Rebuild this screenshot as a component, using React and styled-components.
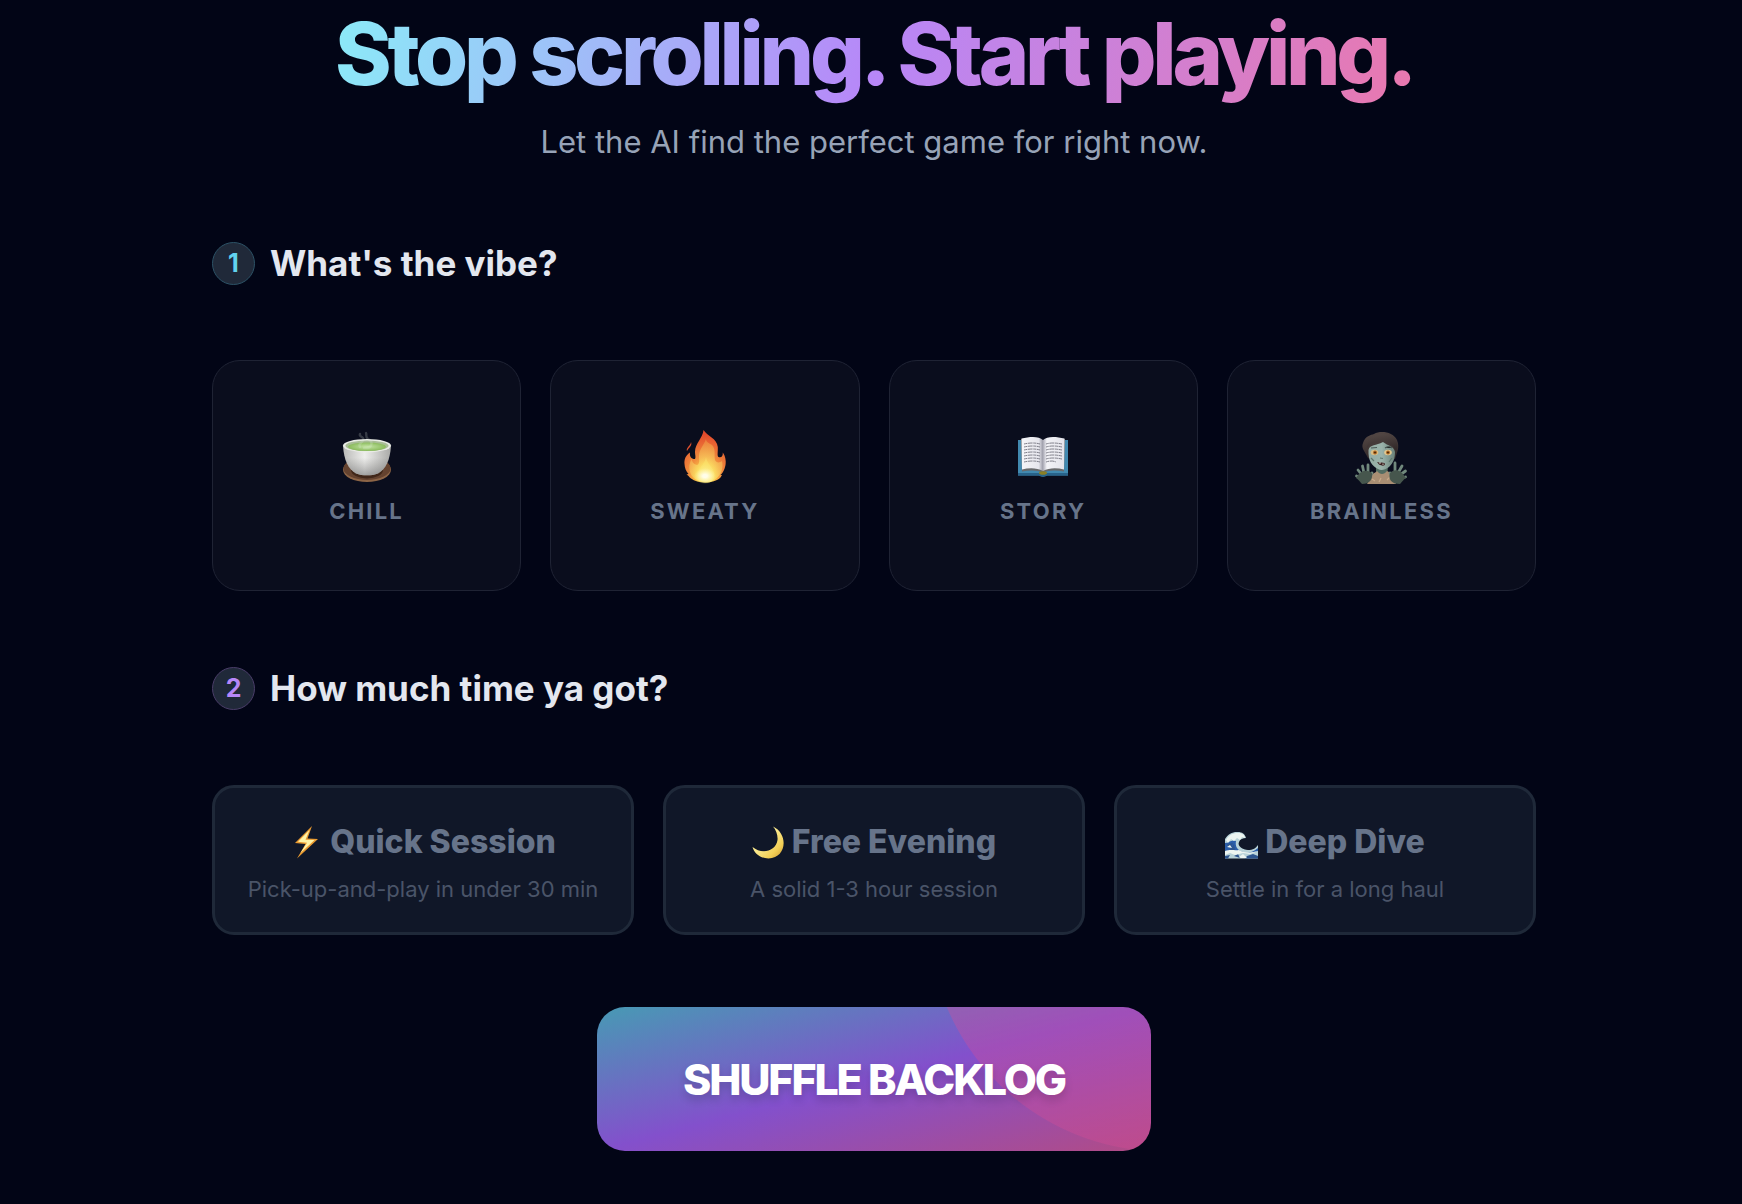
import React, { useState } from "react";
import styled, { createGlobalStyle } from "styled-components";

const GlobalStyle = createGlobalStyle`
  *, *::before, *::after { box-sizing: border-box; }
  body {
    margin: 0;
    background: #020516;
    color: #e3e7ef;
    font-family: Inter, "Liberation Sans", sans-serif;
  }
  button { font: inherit; color: inherit; cursor: pointer; }
`;

const Page = styled.main`
  min-height: 100vh;
  padding: 10px 206px 53px 212px;
`;

const Hero = styled.header`
  display: flex;
  flex-direction: column;
  align-items: center;
  text-align: center;
`;

const Title = styled.h1`
  margin: 0;
  padding: 0 0 8px;
  font-size: 86px;
  line-height: 88px;
  font-weight: 800;
  letter-spacing: -0.05em;
  color: transparent;
  background: linear-gradient(105deg, #8bebf8, #b787f8 50%, #e978ae);
  background-clip: text;
  -webkit-background-clip: text;
`;

const Subtitle = styled.p`
  margin: 16px 0 80px;
  font-size: 31px;
  line-height: 40px;
  color: #97a3b7;
`;

const StepHeading = styled.h2`
  display: flex;
  align-items: center;
  gap: 15px;
  margin: 0 0 75px;
  font-size: 35px;
  line-height: 43px;
  font-weight: 700;
`;

const StepBadge = styled.span`
  display: flex;
  flex: none;
  align-items: center;
  justify-content: center;
  width: 43px;
  height: 43px;
  border: 1px solid ${(p) => p.$edge};
  border-radius: 50%;
  background: #202939;
  color: ${(p) => p.$color};
  font-size: 25px;
`;

const CardGrid = styled.div`
  display: grid;
  grid-template-columns: repeat(${(p) => p.$columns}, 1fr);
  gap: 29px;
  margin-bottom: ${(p) => p.$after}px;
`;

const VibeCard = styled.button`
  display: flex;
  flex-direction: column;
  align-items: center;
  gap: 13px;
  padding: 69px 0 65px;
  border: 1px solid #1f2334;
  border-radius: 28px;
  background: #0a0d1d;

  &[aria-pressed="true"] { border-color: #3c6f85; }
`;

const VibeLabel = styled.span`
  font-size: 22px;
  line-height: 28px;
  font-weight: 700;
  letter-spacing: 0.1em;
  text-transform: uppercase;
  color: #67748a;
`;

const TimeCard = styled.button`
  display: flex;
  flex-direction: column;
  align-items: center;
  gap: 13px;
  padding: 34px 0 29px;
  border: 3px solid #1f2939;
  border-radius: 22px;
  background: #101728;

  &[aria-pressed="true"] { border-color: #6d4f9c; }
`;

const TimeTitle = styled.span`
  display: flex;
  align-items: center;
  gap: 7px;
  font-size: 32px;
  line-height: 40px;
  font-weight: 800;
  color: #67748a;
`;

const TimeNote = styled.span`
  font-size: 22px;
  line-height: 28px;
  color: #4a5468;
`;

const Emoji = styled.svg`
  display: block;
  flex: none;
  width: ${(p) => p.$size}px;
  height: ${(p) => p.$size}px;
`;

const Actions = styled.div`
  display: flex;
  justify-content: center;
`;

const ShuffleButton = styled.button`
  padding: 44px 86px;
  border: 0;
  border-radius: 28px;
  background:
    radial-gradient(circle 236px at calc(100% + 13px) -91px, rgba(216, 76, 150, 0.34) 235px, transparent 236px),
    linear-gradient(to bottom right, #479ab4, #8350cc, #b24b85);
  color: #fff;
  font-size: 43px;
  line-height: 56px;
  font-weight: 800;
  letter-spacing: -0.05em;
  text-shadow: 0 5px 8px rgba(0, 0, 0, 0.16);
`;

function TeaIcon() {
  return (
    <Emoji $size={54} viewBox="0 0 54 54" aria-hidden="true">
      <defs>
        <linearGradient id="cup" x1="0" x2="1">
          <stop offset="0" stopColor="#b9b9b7" />
          <stop offset="0.45" stopColor="#eeeeec" />
          <stop offset="1" stopColor="#a9a9a7" />
        </linearGradient>
        <linearGradient id="cupShade" x1="0" y1="0" x2="0" y2="1">
          <stop offset="0.4" stopColor="#777" stopOpacity="0" />
          <stop offset="1" stopColor="#666" stopOpacity="0.55" />
        </linearGradient>
        <radialGradient id="tea">
          <stop offset="0" stopColor="#c4e4a4" />
          <stop offset="1" stopColor="#8abb5c" />
        </radialGradient>
      </defs>
      <ellipse cx="27" cy="39.8" rx="24" ry="12.2" fill="#8c6446" />
      <ellipse cx="27" cy="38.4" rx="23.6" ry="11.6" fill="#64422f" />
      <ellipse cx="27" cy="40" rx="16" ry="8.5" fill="#412719" />
      <path d="M3 16C4 30 8 39 16 43.4C22 46 32 46 38 43.4C46 39 50 30 51 16Z" fill="url(#cup)" />
      <path d="M3 16C4 30 8 39 16 43.4C22 46 32 46 38 43.4C46 39 50 30 51 16Z" fill="url(#cupShade)" />
      <ellipse cx="27" cy="15.6" rx="24" ry="6.6" fill="#e9ebe5" />
      <ellipse cx="27" cy="15.8" rx="21.6" ry="5.2" fill="#a9bd96" />
      <ellipse cx="27" cy="16.7" rx="19" ry="4.2" fill="url(#tea)" />
      <path d="M20 17C17 12 25 13 23 8C22 6 19 7 20 4M24 18C32 19 34 12 28 9C25 7 27 5 26 3" fill="none" stroke="#e8f0e8" strokeOpacity="0.2" strokeWidth="2.4" strokeLinecap="round" />
    </Emoji>
  );
}

function FireIcon() {
  return (
    <Emoji $size={54} viewBox="0 0 54 54" aria-hidden="true">
      <defs>
        <radialGradient id="flame" cx="0.5" cy="0.9" r="0.82">
          <stop offset="0.2" stopColor="#fbd04a" />
          <stop offset="0.48" stopColor="#f18f3d" />
          <stop offset="1" stopColor="#e24a2c" />
        </radialGradient>
        <radialGradient id="flameCore" cx="0.5" cy="0.85" r="0.8">
          <stop offset="0" stopColor="#fffef0" />
          <stop offset="0.35" stopColor="#fdee72" />
          <stop offset="1" stopColor="#f09b45" />
        </radialGradient>
        <radialGradient id="flameGlow">
          <stop offset="0.2" stopColor="#fffde8" />
          <stop offset="1" stopColor="#fffbb0" stopOpacity="0" />
        </radialGradient>
      </defs>
      <path d="M25.5 0C25 8 17 13 17 22C17 25 18 27 17 29C13 29 11.500 26.500 12 22.500C8 25 6 29 6.500 34C6.700 38 8 41 10.500 44L8.500 44.500C11 46 11 47 13 48.500C20 54 36 54 42.500 47.500L44 45L42.500 45C46 42 48 36 47.700 31C47.500 27 46 24 44.800 22.500C45 26 43.500 28 40.500 27C39 26 40 22 39.800 17C39 8 29 6 25.500 0Z" fill="url(#flame)" />
      <path d="M9 21C7.500 18 13 15 13 12C14.500 16 11 17 9 21Z" fill="#e1502e" />
      <path d="M28 9C26 15 21 19 21 26C21 30 22 34 19 35C15 34 14 31 13.500 29C9 38 12 45 17 49C24 53 34 53 39 48C45 42 45 35 44 31C42 33 38 33 37 30C36 24 38 19 34 15C31 13 28 12 28 9Z" fill="url(#flameCore)" opacity="0.6" />
      <path d="M28 27C27 34 21 37 20 43C19 51 24 53 28 53C34 53 37 49 36 43C35 37 29 34 28 27Z" fill="#fdea72" opacity="0.4" />
      <ellipse cx="27" cy="46" rx="11" ry="8" fill="url(#flameGlow)" />
    </Emoji>
  );
}

function BookIcon() {
  const lines = [14, 17, 20, 23, 26, 29, 32];
  return (
    <Emoji $size={54} viewBox="0 0 54 54" aria-hidden="true">
      <defs>
        <linearGradient id="pageL" x1="0" x2="1">
          <stop offset="0" stopColor="#f5f5f8" />
          <stop offset="0.8" stopColor="#e6e6ed" />
          <stop offset="1" stopColor="#9b9ba7" />
        </linearGradient>
        <linearGradient id="pageR" x1="0" x2="1">
          <stop offset="0" stopColor="#a9a9b5" />
          <stop offset="0.18" stopColor="#f3f3f7" />
          <stop offset="1" stopColor="#e3e3ea" />
        </linearGradient>
      </defs>
      <path d="M2 10H52V45.500H31C29 47 25 47 23 45.500H2Z" fill="#4189b0" />
      <path d="M2 43H52V45.500H31C29 47 25 47 23 45.500H2Z" fill="#28628a" />
      <path d="M5 9L6 41.500C14 40 22 40 27 43C32 40 40 40 48 41.500L49 9L27 12Z" fill="#686a6c" />
      <path d="M5.500 8.500C14 6.500 23 6 27 10V41C21 37.500 13 37.500 6 39.500Z" fill="url(#pageL)" />
      <path d="M48.500 8.500C40 6.500 31 6 27 10V41C33 37.500 41 37.500 48 39.500Z" fill="url(#pageR)" />
      {lines.map((y, i) => (
        <g key={y} stroke="#74747f" strokeWidth="0.9" strokeDasharray="3 0.6 5 0.7">
          <path d={`M8 ${y}Q17 ${y - 2} 24 ${y}`} fill="none" />
          <path d={`M30 ${y}Q36 ${y - 2} ${i === 6 ? 40 : 46} ${y}`} fill="none" />
        </g>
      ))}
      <ellipse cx="27" cy="43" rx="4" ry="1.8" fill="#8a7f25" />
    </Emoji>
  );
}

function ZombieIcon() {
  return (
    <Emoji $size={54} viewBox="0 0 54 54" aria-hidden="true">
      <defs>
        <linearGradient id="skin" x1="0" x2="1">
          <stop offset="0" stopColor="#94aca4" />
          <stop offset="0.5" stopColor="#9ab3ab" />
          <stop offset="1" stopColor="#6a8179" />
        </linearGradient>
        <linearGradient id="hair" x1="0" y1="0" x2="0.3" y2="1">
          <stop offset="0" stopColor="#574b48" />
          <stop offset="1" stopColor="#332a2a" />
        </linearGradient>
      </defs>
      <path d="M22 36H34L33 47H22Z" fill="#536d62" />
      <path d="M13 54L18 45C20 42 22 43 23 41C26 45 30 45 33 41L37 43C40 45 41 50 42 54Z" fill="#a98e73" />
      <path d="M18 49L21 51M27 48L25 52M36 47L33 50" stroke="#c8aa8a" strokeWidth="1.200" />
      <path d="M14 28C10 20 7 18 9 13C11 6 17 5 20 4C27 0 39 2 43 10C46 18 43 22 41 29H16Z" fill="url(#hair)" />
      <path d="M14.500 20C16 14 22 16 29 12C34 16 40 16 41 22C41 29 39 33 35 37C31 40 27 41 24 39C18 36 14 31 14.500 20Z" fill="url(#skin)" />
      <path d="M13 20C13 13 22 14 30 9C33 13 40 15 42 22C45 16 43 7 36 5C25 1 12 7 13 20Z" fill="url(#hair)" />
      <path d="M17 18L23 17.500M31 18C34 16 37 17 38 18" stroke="#4b5955" strokeWidth="1.200" />
      <ellipse cx="20.500" cy="22.500" rx="3.800" ry="2.800" fill="#d9bd83" />
      <ellipse cx="34" cy="22.500" rx="3.800" ry="2.800" fill="#e2c88f" />
      <circle cx="21" cy="22.500" r="1.900" fill="#a8631f" />
      <circle cx="34" cy="22.500" r="1.900" fill="#a8631f" />
      <circle cx="21" cy="22.500" r="0.800" fill="#2b1809" />
      <circle cx="34" cy="22.500" r="0.800" fill="#2b1809" />
      <path d="M26 28L29 28.500M17 28L20 31M38 28L35 32" stroke="#5d756c" strokeWidth="1.200" />
      <path d="M23 32C26 33 29 32 31 33.500C31 36.500 28 36 25 34.500Z" fill="#3b1f20" />
      <path d="M25 33H27M29 33.500V35" stroke="#d7d3c8" strokeWidth="0.900" />
      <g stroke="#71897d" strokeWidth="2.800" strokeLinecap="round">
        <path d="M7 48L2.500 46M8 45L4 40M10 43L8.500 36M14 42L14 35M15 48L18 43" />
        <path d="M47 48L51.500 47M46 45L51.500 41M44 43L48 36M41 42L41 33M39 48L36 43" />
      </g>
      <path d="M2 48C7 40 12 39 18 43C19 49 16 54 8 54C6 52 5 50 2 48Z" fill="#46564d" />
      <path d="M52 48C47 40 41 38 36 43C34 49 37 54 46 54C49 51 49 50 52 48Z" fill="#46564d" />
    </Emoji>
  );
}

function BoltIcon() {
  return (
    <Emoji $size={33} viewBox="0 0 33 33" aria-hidden="true">
      <path d="M22 0L5 17L15.500 18L7 32.500L28 13L17.500 12.500Z" fill="#e99a30" />
      <path d="M19.500 4L8 15.800L17 16.800L10.500 27L24.500 14L15.500 13.800Z" fill="#fff3a5" />
    </Emoji>
  );
}

function MoonIcon() {
  return (
    <Emoji $size={33} viewBox="0 0 33 33" aria-hidden="true">
      <defs>
        <linearGradient id="moon" x1="0" y1="0" x2="1" y2="1">
          <stop offset="0.45" stopColor="#fbe98c" />
          <stop offset="0.75" stopColor="#f2cf56" />
          <stop offset="1" stopColor="#c8942f" />
        </linearGradient>
      </defs>
      <path d="M21 0.500C37 8 34.500 32.500 16.500 32.500C8 32.500 2 27 0.500 21C10 29 24 25 25.500 14C26 9 24 4 21 0.500Z" fill="url(#moon)" />
    </Emoji>
  );
}

function WaveIcon() {
  return (
    <Emoji $size={33} viewBox="0 0 33 33" aria-hidden="true">
      <path d="M0 13C3 8 8 5.500 13 6C17 6 20 8 21 12C18 12 15 13 14 16C12 20 18 24 23 24C28 24 31 22 33 19V32.500H0Z" fill="#b8d2d8" />
      <path d="M0 17C4 17 6 13 11 15C10 20 12 24 18 26C25 28 29 25 33 22V25L25 27L17 26L8 25L0 27Z" fill="#2b5eaa" />
      <path d="M2 18L8 17L5 23ZM9 18L10 24L4 25ZM22 30L28 28L33 30V32.500H20ZM0 30L5 29L3 32.500H0ZM9 30L13 28L15 32Z" fill="#2d558f" />
      <path d="M1 14C4 8 9 7 13 7C17 7 20 9 20 12L17 11L15 14L12 12L9 15L6 13L3 17ZM2 21L5 19L7 22ZM0 25C6 23 9 25 14 24C18 26 21 28 33 25L25 28L18 27L10 29L5 27L0 29ZM14 31L18 28L22 32L16 32Z" fill="#edf5f1" />
    </Emoji>
  );
}

const vibes = [
  { label: "Chill", Icon: TeaIcon },
  { label: "Sweaty", Icon: FireIcon },
  { label: "Story", Icon: BookIcon },
  { label: "Brainless", Icon: ZombieIcon },
];

const times = [
  { label: "Quick Session", note: "Pick-up-and-play in under 30 min", Icon: BoltIcon },
  { label: "Free Evening", note: "A solid 1-3 hour session", Icon: MoonIcon },
  { label: "Deep Dive", note: "Settle in for a long haul", Icon: WaveIcon },
];

export default function App() {
  const [vibe, setVibe] = useState(null);
  const [time, setTime] = useState(null);

  return (
    <>
      <GlobalStyle />
      <Page>
        <Hero>
          <Title>Stop scrolling. Start playing.</Title>
          <Subtitle>Let the AI find the perfect game for right now.</Subtitle>
        </Hero>

        <section>
          <StepHeading>
            <StepBadge $color="#62d2ef" $edge="#2c5266">1</StepBadge>
            What's the vibe?
          </StepHeading>
          <CardGrid $columns={4} $after={76}>
            {vibes.map(({ label, Icon }) => (
              <VibeCard key={label} type="button" aria-pressed={vibe === label} onClick={() => setVibe(label)}>
                <Icon />
                <VibeLabel>{label}</VibeLabel>
              </VibeCard>
            ))}
          </CardGrid>
        </section>

        <section>
          <StepHeading>
            <StepBadge $color="#b787f8" $edge="#4a3d69">2</StepBadge>
            How much time ya got?
          </StepHeading>
          <CardGrid $columns={3} $after={72}>
            {times.map(({ label, note, Icon }) => (
              <TimeCard key={label} type="button" aria-pressed={time === label} onClick={() => setTime(label)}>
                <TimeTitle>
                  <Icon />
                  {label}
                </TimeTitle>
                <TimeNote>{note}</TimeNote>
              </TimeCard>
            ))}
          </CardGrid>
        </section>

        <Actions>
          <ShuffleButton type="button">SHUFFLE BACKLOG</ShuffleButton>
        </Actions>
      </Page>
    </>
  );
}
